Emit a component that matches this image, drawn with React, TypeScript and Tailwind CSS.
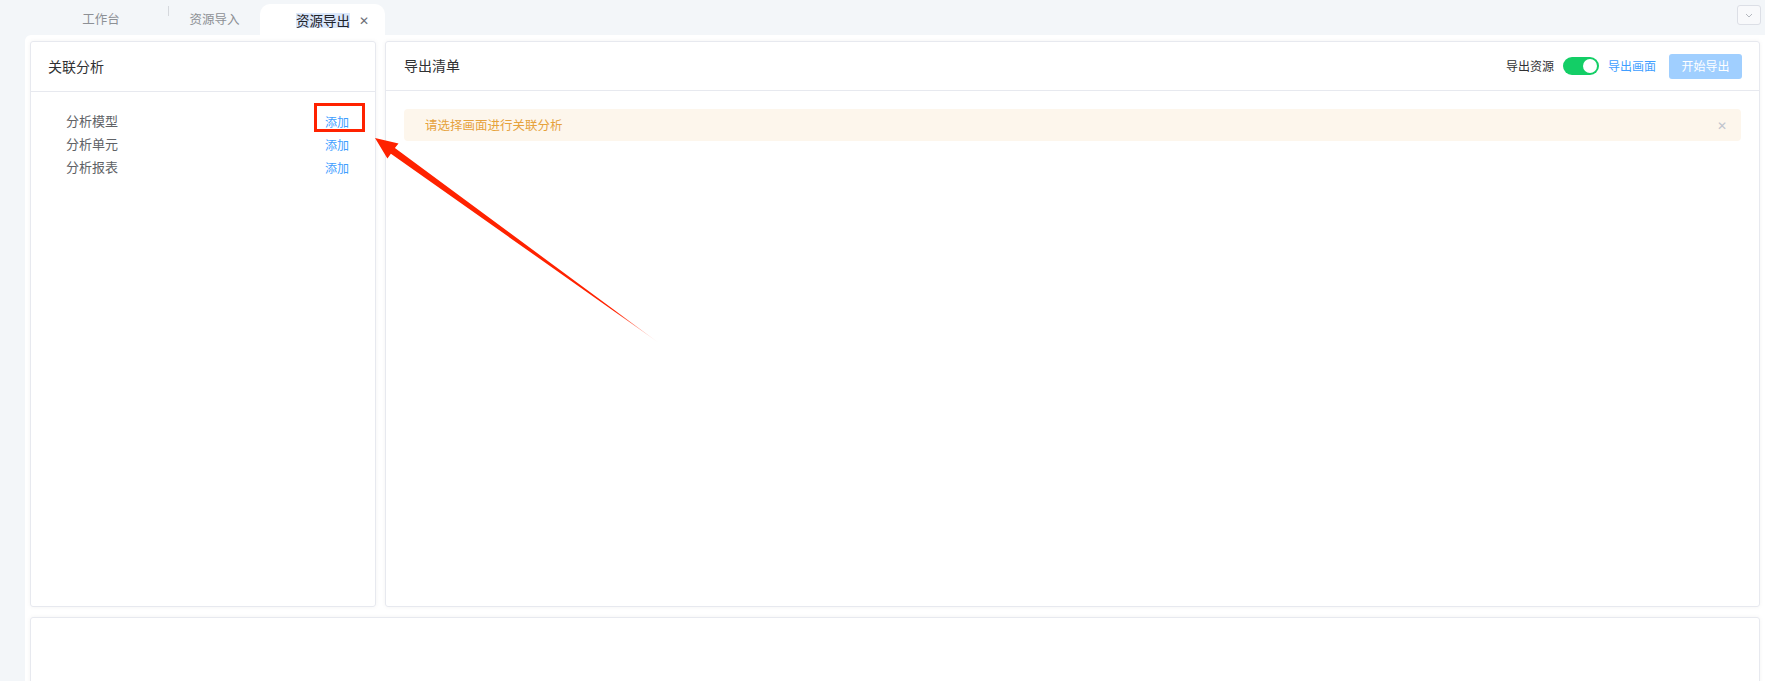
import React from 'react'

const font = { fontFamily: '"Noto Sans CJK SC", "Noto Sans", sans-serif' }

const items = ['分析模型', '分析单元', '分析报表']

const Tabs = () => {
    return (
        <div className="flex h-[35px] items-end bg-[#f3f6f9] relative">
            <div className="w-[25px]" />
            <div className="w-[143px] h-full flex items-center justify-center text-[12.5px] text-[#8d9095] pt-[3px] pl-[9px]">工作台</div>
            <div className="w-px h-[10px] bg-[#d5d8dd] self-start mt-[6px]" />
            <div className="w-[91px] h-full flex items-center justify-center text-[12.5px] text-[#8d9095] pt-[3px]">资源导入</div>
            <div className="w-[125px] h-[31px] bg-white rounded-t-[10px] flex items-center pl-[36px] pt-[1px]">
                <span className="text-[13.5px] text-[#1f2329] bg-[#dbe8fb] leading-[15px]">资源导出</span>
                <span className="ml-[9px] text-[12px] text-[#6b6f76]">✕</span>
            </div>
            <div className="flex-1" />
            <div className="self-start mt-[5px] mr-[4px] w-[24px] h-[20px] border border-[#dcdfe6] rounded-[3px] bg-[#f8f9fb] flex items-center justify-center">
                <svg width="8" height="5" viewBox="0 0 8 5"><path d="M1 1 L4 4 L7 1" stroke="#b4b8bf" fill="none" strokeWidth="1" /></svg>
            </div>
        </div>
    )
}

const App = () => {
    return (
        <div className="relative w-full h-[681px] overflow-hidden bg-[#f3f6f9]" style={font}>
            <Tabs />
            <div className="flex">
                <div className="w-[25px]" />
                <div className="flex-1 bg-white rounded-tl-[6px] pt-[6px] px-[5px] flex flex-col gap-[10px]">
                    <div className="flex gap-[9px] h-[566px]">
                        <div className="w-[346px] border border-[#e7e9ef] rounded-[3px] shadow-[0_0_4px_rgba(0,0,0,0.05)] flex flex-col">
                            <div className="h-[50px] border-b border-[#e7e9ef] flex items-center pl-[17px] text-[14px] text-[#303133] pb-[1px]">关联分析</div>
                            <div className="pt-[17px] pl-[35px] pr-[26px] flex flex-col">
                                {items.map((name, i) => (
                                    <div key={i} className="flex items-center justify-between h-[23px]">
                                        <span className="text-[13px] text-[#606266]">{name}</span>
                                        <span className="text-[12px] text-[#409eff] pt-[2px]">添加</span>
                                    </div>
                                ))}
                            </div>
                        </div>
                        <div className="flex-1 border border-[#e7e9ef] rounded-[3px] shadow-[0_0_4px_rgba(0,0,0,0.05)] flex flex-col">
                            <div className="h-[49px] border-b border-[#e7e9ef] flex items-center pl-[18px] pr-[17px]">
                                <span className="text-[14px] text-[#303133] pb-[1px]">导出清单</span>
                                <div className="flex-1" />
                                <span className="text-[12px] text-[#303133]">导出资源</span>
                                <div className="ml-[9px] w-[36px] h-[18px] rounded-full bg-[#13ce66] flex items-center justify-end pr-[2px]">
                                    <div className="w-[14px] h-[14px] rounded-full bg-white" />
                                </div>
                                <span className="ml-[9px] text-[12px] text-[#409eff]">导出画面</span>
                                <div className="ml-[13px] w-[73px] h-[25px] rounded-[3px] bg-[#a0cfff] text-white text-[12px] flex items-center justify-center">开始导出</div>
                            </div>
                            <div className="px-[18px] pt-[18px]">
                                <div className="h-[32px] rounded-[4px] bg-[#fdf6ec] flex items-center pl-[21px] pr-[14px]">
                                    <span className="text-[12.5px] text-[#e6a23c] flex-1">请选择画面进行关联分析</span>
                                    <span className="text-[12px] text-[#c0c4cc]">✕</span>
                                </div>
                            </div>
                        </div>
                    </div>
                    <div className="h-[80px] border border-[#e7e9ef] rounded-[3px] shadow-[0_0_4px_rgba(0,0,0,0.05)]" />
                </div>
            </div>
            {/* annotation */}
            <div className="absolute left-[314px] top-[103px] w-[51px] h-[29px] border-[3px] border-[#ff2200] pointer-events-none" />
            <svg className="absolute inset-0 pointer-events-none" width="1765" height="681" viewBox="0 0 1765 681">
                <defs>
                    <linearGradient id="fade" gradientUnits="userSpaceOnUse" x1="375" y1="138" x2="657" y2="341">
                        <stop offset="0" stopColor="#ff2200" />
                        <stop offset="0.85" stopColor="#ff2200" />
                        <stop offset="1" stopColor="#ff2200" stopOpacity="0.1" />
                    </linearGradient>
                </defs>
                <polygon
                    points="375,138 398.5,143.4 394.9,148.1 659,343 390.9,153.7 387.4,158.4"
                    fill="url(#fade)"
                />
            </svg>
        </div>
    )
}

export default App
